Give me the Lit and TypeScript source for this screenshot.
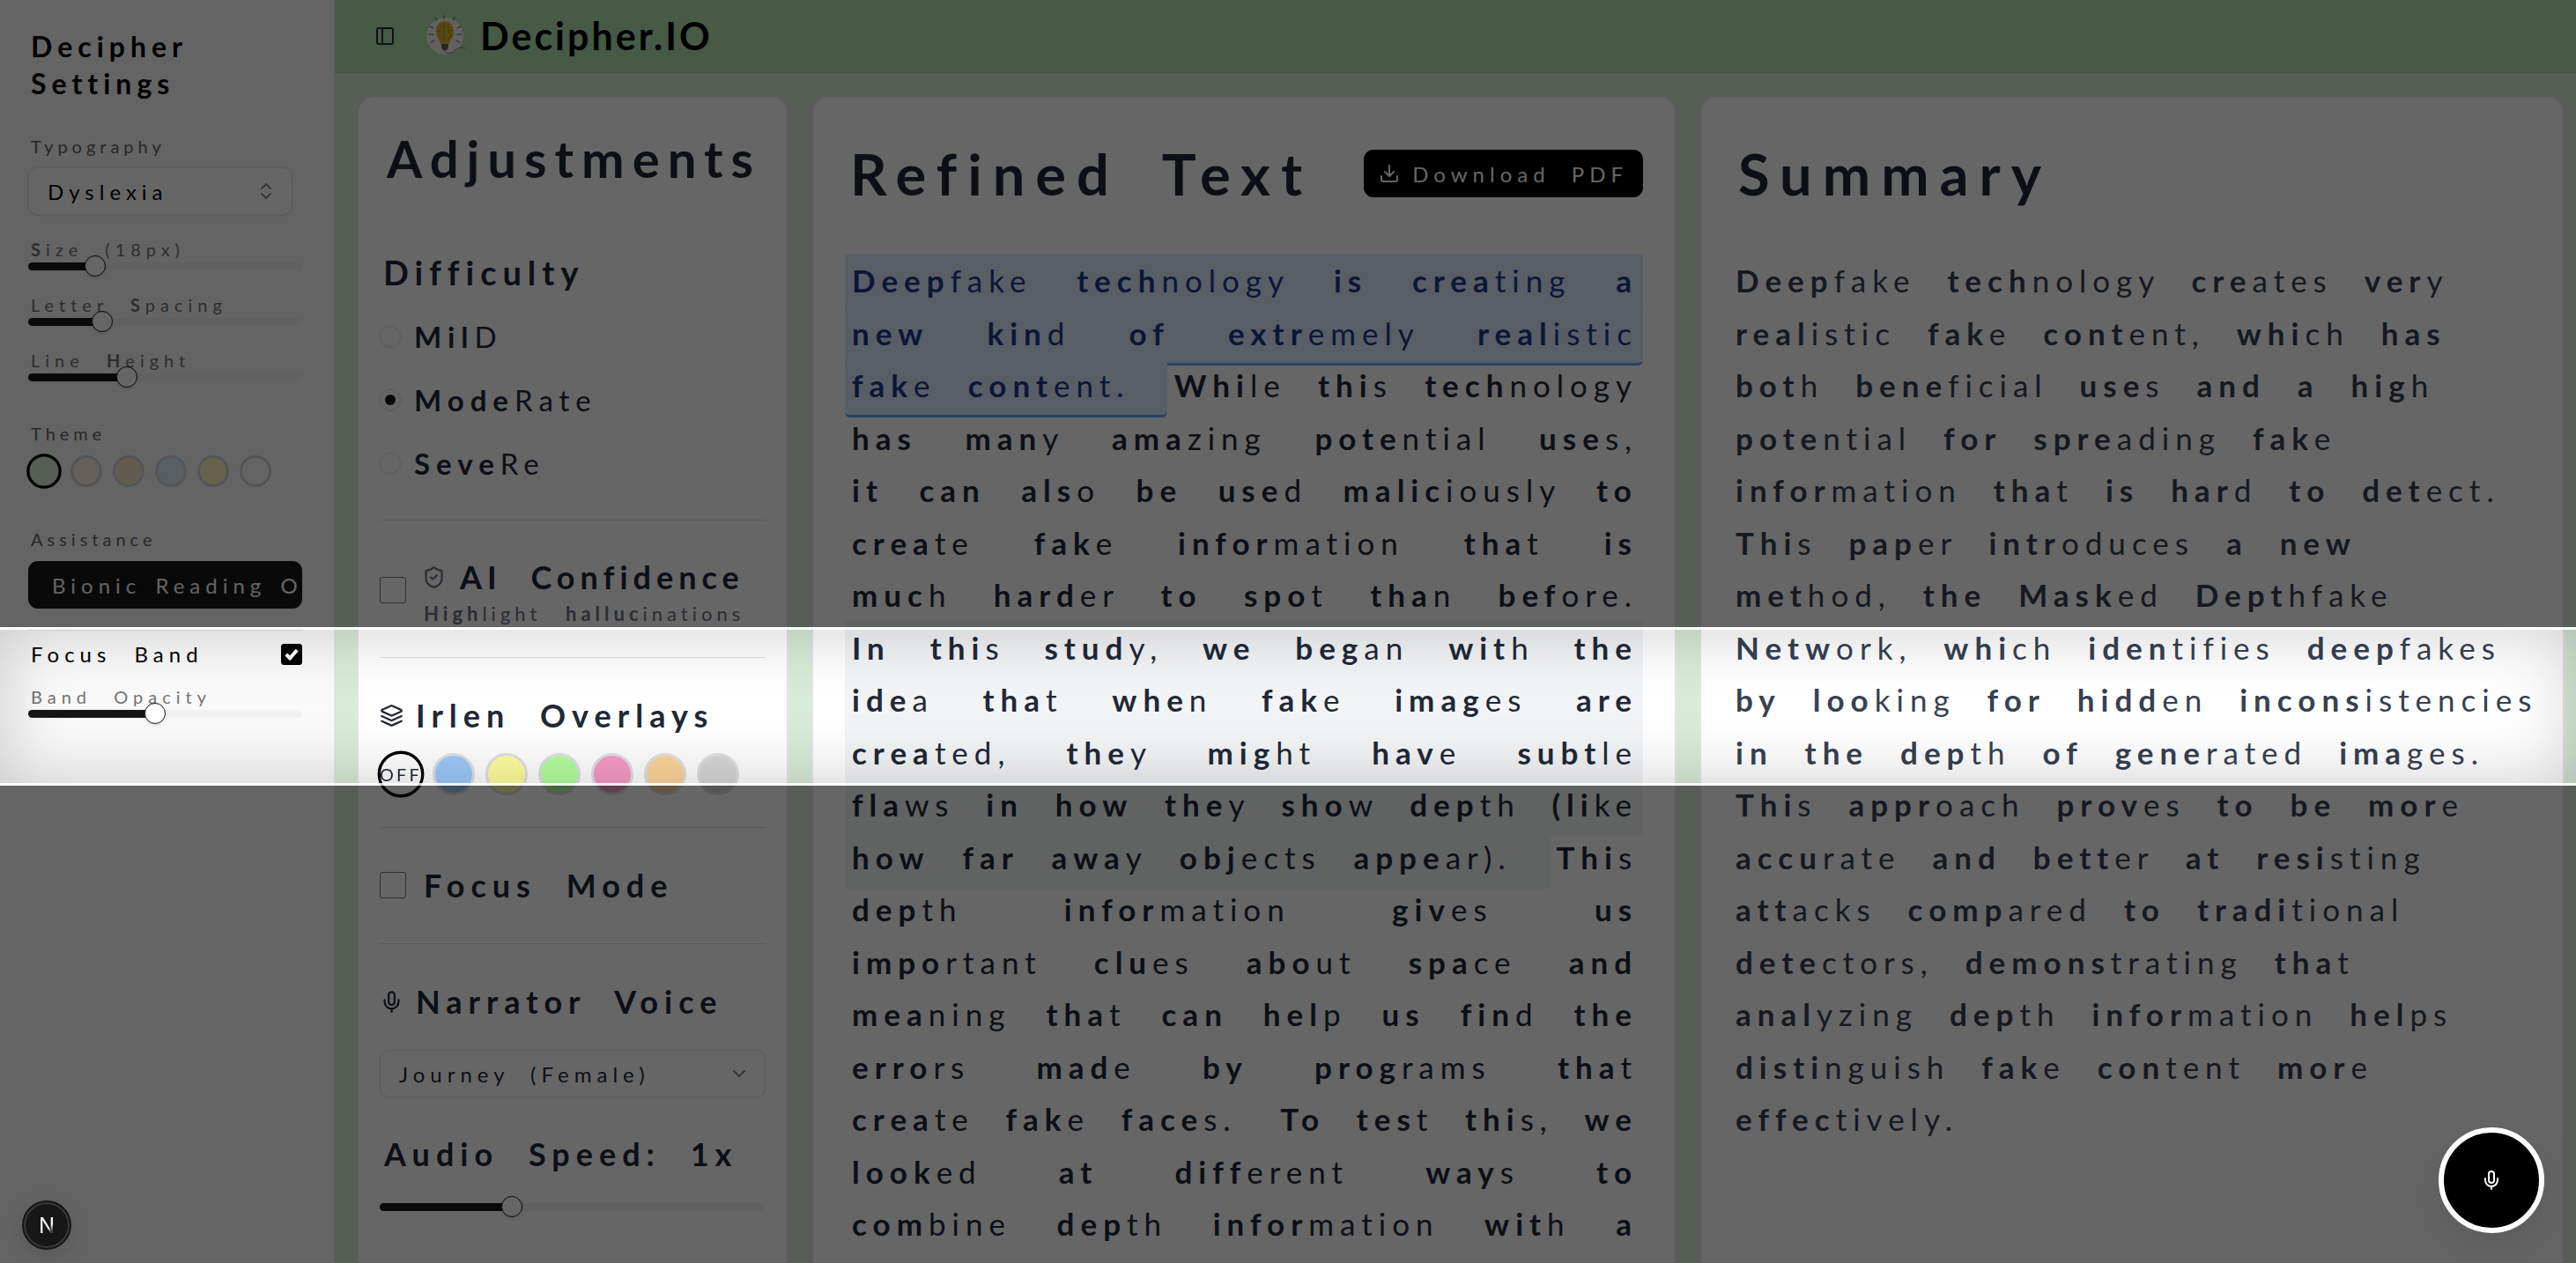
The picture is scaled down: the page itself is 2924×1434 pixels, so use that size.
import { LitElement, html, css, svg, nothing } from "lit";
import { customElement, property } from "lit/decorators.js";
import { classMap } from "lit/directives/class-map.js";
import { styleMap } from "lit/directives/style-map.js";

const ICONS: Record<string, unknown> = {
  panel: svg`<rect width="18" height="18" x="3" y="3" rx="2"/><path d="M9 3v18"/>`,
  chevrons: svg`<path d="m7 15 5 5 5-5"/><path d="m7 9 5-5 5 5"/>`,
  chevron: svg`<path d="m6 9 6 6 6-6"/>`,
  shield: svg`<path d="M20 13c0 5-3.500 7.500-7.660 8.950a1 1 0 0 1-.67-.01C7.500 20.500 4 18 4 13V6a1 1 0 0 1 1-1c2 0 4.500-1.200 6.240-2.720a1.170 1.170 0 0 1 1.520 0C14.510 3.810 17 5 19 5a1 1 0 0 1 1 1z"/><path d="m9 12 2 2 4-4"/>`,
  layers: svg`<path d="m12.830 2.180a2 2 0 0 0-1.660 0L2.600 6.080a1 1 0 0 0 0 1.830l8.580 3.910a2 2 0 0 0 1.660 0l8.580-3.900a1 1 0 0 0 0-1.830Z"/><path d="m22 12.500-9.170 4.160a2 2 0 0 1-1.660 0L2 12.500"/><path d="m22 17.500-9.170 4.160a2 2 0 0 1-1.660 0L2 17.500"/>`,
  mic: svg`<path d="M12 2a3 3 0 0 0-3 3v7a3 3 0 0 0 6 0V5a3 3 0 0 0-3-3Z"/><path d="M19 10v2a7 7 0 0 1-14 0v-2"/><path d="M12 19v3"/>`,
  download: svg`<path d="M21 15v4a2 2 0 0 1-2 2H5a2 2 0 0 1-2-2v-4"/><path d="m7 10 5 5 5-5"/><path d="M12 15V3"/>`,
};

const icon = (name: string, size = 24) =>
  svg`<svg class="icon" width=${size} height=${size} viewBox="0 0 24 24" fill="none" stroke="currentColor" stroke-width="2" stroke-linecap="round" stroke-linejoin="round" aria-hidden="true">${ICONS[name]}</svg>`;

/* Number of leading characters set in bold for a word of length n. */
const boldCount = (n: number) => (n <= 3 ? n : n <= 6 ? Math.ceil(n * 0.6) : Math.ceil(n * 0.4));

const bionicWord = (w: string) => {
  const k = boldCount(w.length);
  return html`<b>${w.slice(0, k)}</b>${w.slice(k)}`;
};

const bionic = (text: string) =>
  text.split(/(\s)/).map((t) => (t === "\n" ? html`<br />` : t === " " ? " " : t ? bionicWord(t) : nothing));

type Sentence = { text: string; mark?: "blue" | "gray" };

const REFINED: Sentence[] = [
  { text: "Deepfake technology is creating a\nnew kind of extremely realistic\nfake content. ", mark: "blue" },
  { text: "While this technology\nhas many amazing potential uses,\nit can also be used maliciously to\ncreate fake information that is\nmuch harder to spot than before.\n" },
  { text: "In this study, we began with the\nidea that when fake images are\ncreated, they might have subtle\nflaws in how they show depth (like\nhow far away objects appear). ", mark: "gray" },
  { text: "This\ndepth information gives us\nimportant clues about space and\nmeaning that can help us find the\nerrors made by programs that\ncreate fake faces. " },
  { text: "To test this, we\nlooked at different ways to\ncombine depth information with a" },
];

const SUMMARY =
  "Deepfake technology creates very\nrealistic fake content, which has\nboth beneficial uses and a high\npotential for spreading fake\ninformation that is hard to detect.\nThis paper introduces a new\nmethod, the Masked Depthfake\nNetwork, which identifies deepfakes\nby looking for hidden inconsistencies\nin the depth of generated images.\nThis approach proves to be more\naccurate and better at resisting\nattacks compared to traditional\ndetectors, demonstrating that\nanalyzing depth information helps\ndistinguish fake content more\neffectively.";

const shared = css`
  :host {
    display: block;
    font-family: Lato, "Open Sans", sans-serif;
    box-sizing: border-box;
  }
  *, *::before, *::after { box-sizing: border-box; }
  h1, h2, h3, p { margin: 0; }
  button, select, input { font: inherit; color: inherit; letter-spacing: inherit; word-spacing: inherit; margin: 0; }
  b { font-weight: 700; }
  .icon { display: block; flex: none; }
  .select { position: relative; display: flex; align-items: center; }
  .select select {
    appearance: none;
    width: 100%;
    height: 54px;
    padding: 0 48px 0 21px;
    border: 1px solid #e5e5e5;
    border-radius: 11px;
    background: #fff;
    box-shadow: 0 1px 3px rgba(0, 0, 0, 0.08);
    font-size: 24px;
    letter-spacing: 6px;
    word-spacing: 12px;
  }
  .select .icon { position: absolute; right: 18px; color: #8a8a8a; pointer-events: none; }
  .rule { height: 1px; border: 0; margin: 0; background: #e2e2e2; }
`;

@customElement("range-slider")
class RangeSlider extends LitElement {
  @property() label = "";
  @property({ type: Number }) min = 0;
  @property({ type: Number }) max = 100;
  @property({ type: Number }) step = 1;
  @property({ type: Number }) value = 0;

  static styles = css`
    :host { display: block; height: 24px; }
    input {
      appearance: none;
      display: block;
      width: 100%;
      height: 24px;
      margin: 0;
      background: none;
    }
    input::-webkit-slider-runnable-track {
      height: 9px;
      border-radius: 5px;
      background: linear-gradient(#171717, #171717) left / calc(12px + var(--part) * (100% - 24px)) 100% no-repeat #f3f3f3;
    }
    input::-webkit-slider-thumb {
      appearance: none;
      width: 24px;
      height: 24px;
      margin-top: -8px;
      border: 1px solid #171717;
      border-radius: 50%;
      background: #fff;
      box-shadow: 0 1px 4px rgba(0, 0, 0, 0.15);
    }
  `;

  render() {
    const part = (this.value - this.min) / (this.max - this.min);
    return html`<input type="range" aria-label=${this.label} min=${this.min} max=${this.max} step=${this.step}
      .value=${String(this.value)} style=${styleMap({ "--part": String(part) })}
      @input=${(e: Event) => (this.value = Number((e.target as HTMLInputElement).value))} />`;
  }
}

@customElement("settings-sidebar")
class SettingsSidebar extends LitElement {
  static styles = [
    shared,
    css`
      :host {
        padding: 32px 36px 0 32px;
        background: #fafafa;
        border-right: 1px solid #e5e5e5;
        color: #0a0a0a;
      }
      h2 { padding-left: 3px; font-size: 32px; line-height: 42px; letter-spacing: 6px; margin-bottom: 35px; color: #000; }
      .label { display: block; padding-left: 3px; font-size: 20px; line-height: 30px; letter-spacing: 6px; word-spacing: 14px; color: #737373; }
      .group { margin-top: 17px; }
      .group.first { margin-top: 24px; }
      range-slider { margin-top: -8px; }
      .select { margin: 9px 11px 0 0; color: #000; }
      .heading { letter-spacing: 5px; color: #636363; }
      .theme { margin-top: 37px; }
      .swatches { display: flex; gap: 12px; margin: 10px 0 44px; }
      .swatch { width: 36px; height: 36px; padding: 0; border: 3px solid #d1d5db; border-radius: 50%; flex: none; }
      .swatch.on { border-color: #000; transform: scale(1.1); }
      .sage { background: #d8ebd8; }
      .cream { background: #fdf2e0; }
      .sand { background: #f5e6c8; }
      .sky { background: #dbeef6; }
      .lemon { background: #fff6bb; }
      .plain { background: #fafafa; }
      .bionic {
        display: block;
        width: 100%;
        height: 54px;
        margin: 10px 0 24px;
        padding: 0 0 0 27px;
        overflow: hidden;
        border: 0;
        border-radius: 11px;
        background: #171717;
        color: #fafafa;
        font-size: 24px;
        letter-spacing: 6px;
        word-spacing: 4px;
        text-align: left;
        white-space: nowrap;
      }
      .check { display: flex; align-items: center; justify-content: space-between; margin: 9px 0 15px; padding-left: 3px; font-size: 24px; line-height: 36px; letter-spacing: 6px; word-spacing: 14px; color: #000; }
      .check input { appearance: none; width: 24px; height: 24px; flex: none; border-radius: 3px; border: 1px solid #000; background: #fff; display: grid; place-items: center; }
      .check input:checked { background: #000; }
      .check input:checked::after { content: ""; width: 8px; height: 14px; margin-top: -3px; border: solid #fff; border-width: 0 4px 4px 0; transform: rotate(42deg); }
    `,
  ];

  render() {
    return html`
      <h2>Decipher<br />Settings</h2>
      <label class="label heading" for="font">Typography</label>
      <div class="select">
        <select id="font"><option>Dyslexia</option></select>${icon("chevrons")}
      </div>
      <div class="group first"><span class="label"><b>S</b>ize (18px)</span><range-slider label="Size" min="14" max="32" value="18"></range-slider></div>
      <div class="group"><span class="label">Letter <b>S</b>pacing</span><range-slider label="Letter Spacing" value="25"></range-slider></div>
      <div class="group"><span class="label">Line <b>H</b>eight</span><range-slider label="Line Height" value="35"></range-slider></div>
      <div class="theme">
        <span class="label heading">Theme</span>
        <div class="swatches">
          ${["sage", "cream", "sand", "sky", "lemon", "plain"].map(
            (c, i) => html`<button class=${classMap({ swatch: true, [c]: true, on: i === 0 })} aria-label=${c}></button>`
          )}
        </div>
      </div>
      <span class="label heading">Assistance</span>
      <button class="bionic">Bionic Reading On</button>
      <hr class="rule" />
      <label class="check">Focus Band<input type="checkbox" checked /></label>
      <span class="label">Band Opacity</span>
      <range-slider label="Band Opacity" value="46"></range-slider>
    `;
  }
}

@customElement("adjustments-panel")
class AdjustmentsPanel extends LitElement {
  static styles = [
    shared,
    css`
      :host { padding: 36px 24px 0; color: #1f2937; }
      h1 { padding-left: 8px; font-size: 58px; line-height: 68px; letter-spacing: 9px; white-space: nowrap; margin-bottom: 71px; }
      h3, .toggle { font-size: 36px; line-height: 44px; letter-spacing: 7px; word-spacing: 18px; font-weight: 700; white-space: nowrap; }
      h3 { display: flex; align-items: center; gap: 14px; }
      .difficulty { font-size: 38px; line-height: 48px; padding-left: 4px; margin-bottom: 25px; }
      .options { display: grid; gap: 24px; margin-bottom: 40px; }
      .option { display: flex; align-items: center; gap: 15px; font-size: 33px; line-height: 48px; letter-spacing: 7px; }
      .option input { appearance: none; width: 24px; height: 24px; border: 1px solid #e2e2e2; border-radius: 50%; display: grid; place-items: center; box-shadow: 0 1px 3px rgba(0, 0, 0, 0.08); }
      .option input:checked::after { content: ""; width: 12px; height: 12px; border-radius: 50%; background: #171717; }
      .toggle { display: flex; align-items: center; gap: 20px; margin-top: 43px; }
      .toggle input { appearance: none; width: 30px; height: 30px; flex: none; border: 1px solid #767676; border-radius: 3px; background: #fff; }
      .toggle input:checked { background: #171717; }
      .confidence { gap: 18px; margin: 42px 0 33px; letter-spacing: 6px; }
      .confidence input { margin-bottom: 6px; }
      .stack { display: grid; gap: 4px; }
      .line { display: flex; align-items: center; gap: 16px; }
      .line .icon { color: #6b7280; }
      .hint { padding-left: 2px; font-size: 22px; line-height: 32px; letter-spacing: 5px; word-spacing: 17px; font-weight: 400; color: #6b7280; }
      .irlen { margin: 43px 0 21px; }
      .overlays { display: flex; gap: 12px; margin-bottom: 36px; }
      .overlay { width: 48px; height: 48px; flex: none; padding: 0; border: 3px solid #dfe1e5; border-radius: 50%; }
      .off { display: flex; align-items: center; justify-content: center; background: #fff; border-color: #000; transform: scale(1.1); font-size: 18px; letter-spacing: 3px; }
      .blue { background: #9ec9fa; }
      .yellow { background: #ffff9f; }
      .green { background: #b5ff9f; }
      .pink { background: #f79bc5; }
      .orange { background: #fdd59c; }
      .grey { background: #d7d7d7; }
      .focus { margin-bottom: 44px; }
      .narrator { margin: 43px 0 33px; }
      .speed { padding-left: 5px; margin: 42px 0 26px; }
    `,
  ];

  render() {
    return html`
      <h1>Adjustments</h1>
      <h3 class="difficulty" id="difficulty">Difficulty</h3>
      <div class="options" role="radiogroup" aria-labelledby="difficulty">
        ${["MilD", "ModeRate", "SeveRe"].map(
          (o, i) => html`<label class="option"><input type="radio" name="difficulty" ?checked=${i === 1} /><span>${bionicWord(o)}</span></label>`
        )}
      </div>
      <hr class="rule" />
      <label class="toggle confidence">
        <input type="checkbox" />
        <span class="stack">
          <span class="line">${icon("shield", 27)}<span>AI Confidence</span></span>
          <span class="hint">${bionic("Highlight hallucinations")}</span>
        </span>
      </label>
      <hr class="rule" />
      <h3 class="irlen">${icon("layers", 27)}<span>Irlen Overlays</span></h3>
      <div class="overlays">
        <button class="overlay off">OFF</button>
        ${["blue", "yellow", "green", "pink", "orange", "grey"].map(
          (c) => html`<button class=${classMap({ overlay: true, [c]: true })} aria-label=${c}></button>`
        )}
      </div>
      <hr class="rule" />
      <label class="toggle focus"><input type="checkbox" /><span>Focus Mode</span></label>
      <hr class="rule" />
      <h3 class="narrator">${icon("mic", 27)}<label for="voice">Narrator Voice</label></h3>
      <div class="select">
        <select id="voice"><option>Journey (Female)</option></select>${icon("chevron")}
      </div>
      <h3 class="speed">Audio Speed: 1x</h3>
      <range-slider label="Audio Speed" min="0.5" max="2" step="0.1" value="1"></range-slider>
    `;
  }
}

@customElement("app-root")
class AppRoot extends LitElement {
  static styles = [
    shared,
    css`
      :host { height: 100vh; overflow: hidden; position: relative; background: #d8ebd8; }
      .shell { display: grid; grid-template-columns: 380px minmax(0, 1fr); min-height: 100vh; }
      header { display: flex; align-items: center; height: 83px; padding: 0 45px; background: #afe1af; border-bottom: 1px solid #a6d3a6; color: #000; }
      .menu { padding: 0; border: 0; background: none; color: #262b33; }
      .logo { display: block; margin: 0 13px 0 33px; }
      .brand { font-size: 43px; line-height: 54px; font-weight: 700; letter-spacing: 3px; }
      .cards { display: grid; grid-template-columns: minmax(0, 1fr) minmax(0, 2fr) minmax(0, 2fr); gap: 24px; padding: 24px 12px 24px 24px; min-height: 100vh; }
      .card { border: 3px solid #e5e5e7; border-radius: 21px; background: #fff; overflow: hidden; }
      .doc { padding: 48px 36px 0; }
      .top { display: flex; align-items: center; justify-content: space-between; height: 78px; margin-bottom: 53px; padding-left: 6px; color: #1f2937; }
      .top h1 { font-size: 65px; line-height: 78px; letter-spacing: 12px; word-spacing: 22px; white-space: nowrap; }
      .download { display: flex; align-items: center; gap: 14px; height: 54px; padding: 0 17px 0 17px; border: 0; border-radius: 11px; background: #000; color: #fff; font-size: 24px; letter-spacing: 6px; word-spacing: 12px; white-space: nowrap; }
      .body { font-size: 35px; line-height: 1.7; letter-spacing: 7px; white-space: nowrap; }
      .refined { text-align: justify; text-align-last: justify; color: #1f2937; word-spacing: 8px; white-space: normal; overflow: hidden; }
      .refined span { padding: 11px 6px 13px 8px; border-bottom: 3px solid transparent; border-radius: 6px; box-decoration-break: clone; -webkit-box-decoration-break: clone; }
      .refined .blue { background: #dbeafe; border-color: #60a5fa; color: #1e3a8a; }
      .refined .gray { background: #f3f4f6; }
      .summary { padding-left: 3px; color: #374151; word-spacing: 20px; }
      .band {
        position: absolute;
        left: 0;
        right: 0;
        top: 712px;
        height: 180px;
        border: solid rgba(255, 255, 255, 0.8);
        border-width: 3px 0;
        box-shadow: 0 0 0 3000px rgba(0, 0, 0, 0.6), inset 0 0 80px rgba(0, 0, 0, 0.2);
        pointer-events: none;
      }
      .talk { position: absolute; right: 36px; bottom: 34px; width: 120px; height: 120px; display: grid; place-items: center; border: 6px solid #fff; border-radius: 50%; background: #000; color: #fff; box-shadow: 0 18px 60px rgba(0, 0, 0, 0.12); }
      .dev { position: absolute; left: 25px; bottom: 15px; width: 56px; height: 56px; display: grid; place-items: center; padding: 0; border: 2px solid #171717; border-radius: 50%; background: #171717; box-shadow: inset 0 0 0 2px #3a3a3a, 0 6px 24px rgba(0, 0, 0, 0.12); font-family: Inter, sans-serif; font-size: 24px; letter-spacing: 0; color: #fff; }
      .dev span { background: linear-gradient(135deg, #fff 60%, #444 74%); background-clip: text; color: transparent; }
    `,
  ];

  private logo() {
    return html`<svg class="logo" width="50" height="50" viewBox="0 0 50 50" role="img" aria-label="Light bulb">
      <circle cx="23" cy="25" r="21" fill="#f4f0f0" />
      <g stroke="#4d5a4d" stroke-width="1" stroke-linecap="round">
        <path d="M22 2v3M12 4l2 3M34 4l-2 3M6 14l4 2M37 16l4-2M5 23h5M37 23h5M7 32l4-2M36 30l4 2" />
      </g>
      <path d="M23 8c-7 0-11 6-10 14 .5 5 4 7 5 12h10c1-5 4-7 5-12 1-8-3-14-10-14Z" fill="#dcba38" />
      <path d="M22 9v24M17 12c3 1 3 3 0 5s2 4 0 6 3 3 2 6M28 11c-3 2-2 4 1 5s-4 3 0 6-3 4-2 7M14 19l5 1M26 19l6-1" fill="none" stroke="#a38416" stroke-width="1" />
      <path d="M19 34h8v4l-2 3h-4l-2-3z" fill="#5f6266" />
      <path d="M23 41c1 5 8 4 12 0s8-4 11-2" fill="none" stroke="#6e776e" stroke-width="1" />
    </svg>`;
  }

  render() {
    return html`
      <div class="shell">
        <settings-sidebar></settings-sidebar>
        <div>
          <header>
            <button class="menu" aria-label="Toggle sidebar">${icon("panel")}</button>
            ${this.logo()}
            <div class="brand">Decipher.IO</div>
          </header>
          <main class="cards">
            <adjustments-panel class="card"></adjustments-panel>
            <section class="card doc">
              <div class="top">
                <h1>Refined Text</h1>
                <button class="download">${icon("download")}<span>Download PDF</span></button>
              </div>
              <p class="body refined">${REFINED.map((s) => html`<span class=${s.mark ?? "none"}>${bionic(s.text)}</span>`)}</p>
            </section>
            <section class="card doc">
              <div class="top"><h1>Summary</h1></div>
              <p class="body summary">${bionic(SUMMARY)}</p>
            </section>
          </main>
        </div>
      </div>
      <div class="band"></div>
      <button class="talk" aria-label="Talk">${icon("mic")}</button>
      <button class="dev" aria-label="Developer tools"><span>N</span></button>
    `;
  }
}
